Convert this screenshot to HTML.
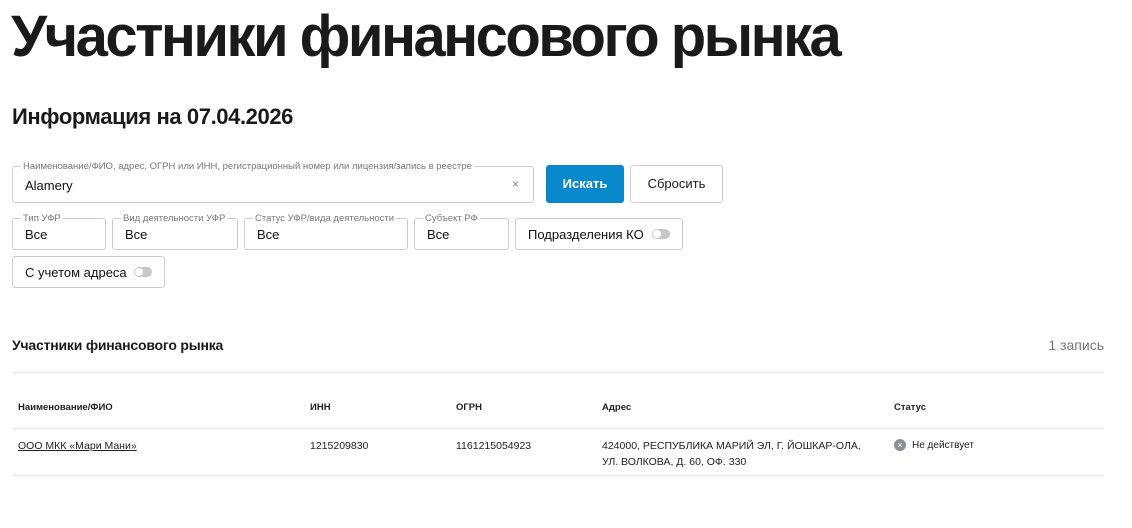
<!DOCTYPE html>
<html><head><meta charset="utf-8"><style>
*{box-sizing:border-box;margin:0;padding:0}
body{width:1132px;height:528px;background:#fff;font-family:"Liberation Sans",sans-serif;color:#1a1a1a;position:relative;overflow:hidden}
.a{position:absolute}
h1{position:absolute;left:11px;top:2px;font-size:58px;font-weight:bold;letter-spacing:-2.55px;white-space:nowrap;line-height:70px}
h2{position:absolute;left:12px;top:104px;font-size:22px;font-weight:bold;letter-spacing:-0.4px}
.box{position:absolute;border:1px solid #c9cdd2;border-radius:3px;background:#fff}
.lg{position:absolute;top:-6px;left:8px;font-size:9.5px;color:#777;background:#fff;padding:0 2px;white-space:nowrap;line-height:11px}
.v{position:absolute;left:12px;font-size:13px;color:#111}
.tg{position:absolute;width:18px;height:10px;border-radius:5px;background:#c8c8c8}
.tg:after{content:"";position:absolute;left:1px;top:1px;width:8px;height:8px;border-radius:50%;background:#fff}
.th{position:absolute;top:402px;font-size:9.5px;font-weight:bold;color:#222}
.td{position:absolute;top:438px;font-size:10.5px;color:#222;line-height:16px}
.hr{position:absolute;left:12px;width:1092px;height:1px;background:#e6e6e6}
</style></head><body>
<h1>Участники финансового рынка</h1>
<h2>Информация на 07.04.2026</h2>

<div class="box" style="left:12px;top:166px;width:522px;height:37px"><span class="lg">Наименование/ФИО, адрес, ОГРН или ИНН, регистрационный номер или лицензия/запись в реестре</span><span class="v" style="top:11px">Alamery</span><span class="a" style="right:14px;top:10px;font-size:12px;color:#888">×</span></div>
<div class="a" style="left:546px;top:165px;width:78px;height:38px;background:#0a88cc;border-radius:3px;color:#fff;font-weight:bold;font-size:13px;text-align:center;line-height:38px">Искать</div>
<div class="box" style="left:630px;top:165px;width:93px;height:38px;font-size:13px;text-align:center;line-height:36px">Сбросить</div>

<div class="box" style="left:12px;top:218px;width:94px;height:32px"><span class="lg">Тип УФР</span><span class="v" style="top:8px">Все</span></div>
<div class="box" style="left:112px;top:218px;width:126px;height:32px"><span class="lg">Вид деятельности УФР</span><span class="v" style="top:8px">Все</span></div>
<div class="box" style="left:244px;top:218px;width:164px;height:32px"><span class="lg">Статус УФР/вида деятельности</span><span class="v" style="top:8px">Все</span></div>
<div class="box" style="left:414px;top:218px;width:95px;height:32px"><span class="lg">Субъект РФ</span><span class="v" style="top:8px">Все</span></div>
<div class="box" style="left:515px;top:218px;width:168px;height:32px"><span class="v" style="top:8px">Подразделения КО</span><span class="tg" style="left:136px;top:10px"></span></div>
<div class="box" style="left:12px;top:256px;width:153px;height:32px"><span class="v" style="top:8px">С учетом адреса</span><span class="tg" style="left:121px;top:10px"></span></div>

<div class="a" style="left:12px;top:337px;font-size:14px;font-weight:bold;letter-spacing:-0.2px">Участники финансового рынка</div>
<div class="a" style="right:28px;top:337px;font-size:14px;color:#777">1 запись</div>
<div class="hr" style="top:372px"></div>

<div class="th" style="left:18px">Наименование/ФИО</div>
<div class="th" style="left:310px">ИНН</div>
<div class="th" style="left:456px">ОГРН</div>
<div class="th" style="left:602px">Адрес</div>
<div class="th" style="left:894px">Статус</div>
<div class="hr" style="top:428px"></div>

<div class="td" style="left:18px;text-decoration:underline">ООО МКК «Мари Мани»</div>
<div class="td" style="left:310px">1215209830</div>
<div class="td" style="left:456px">1161215054923</div>
<div class="td" style="left:602px">424000, РЕСПУБЛИКА МАРИЙ ЭЛ, Г. ЙОШКАР-ОЛА,<br>УЛ. ВОЛКОВА, Д. 60, ОФ. 330</div>
<div class="a" style="left:894px;top:439px;width:12px;height:12px;border-radius:50%;background:#8a8f96;color:#fff;font-size:9px;line-height:12px;text-align:center">×</div>
<div class="td" style="left:912px;font-size:10px">Не действует</div>
<div class="hr" style="top:475px"></div>
</body></html>
